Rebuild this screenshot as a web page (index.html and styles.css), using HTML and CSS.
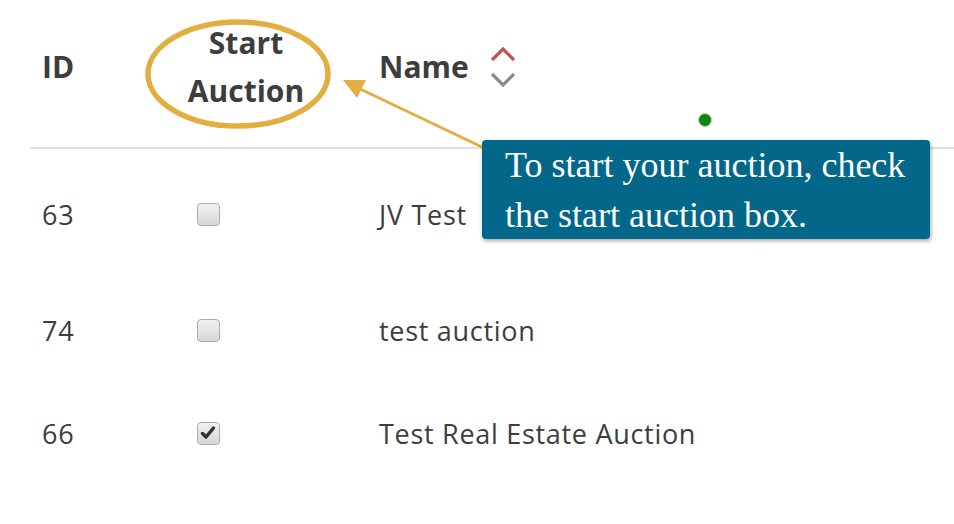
FILE: index.html
```html
<!DOCTYPE html>
<html>
<head>
<meta charset="utf-8">
<link rel="stylesheet" href="styles.css">
</head>
<body>
<div class="page">
  <div class="table">
    <div class="thead">
      <div class="th th-id">ID</div>
      <div class="th th-start"><span class="th-start-text">Start<br>Auction</span></div>
      <div class="th th-name">Name
        <svg class="sort" width="28" height="42" viewBox="0 0 28 42">
          <polyline points="3,13 14,2 25,13" fill="none" stroke="#c9514f" stroke-width="3.2"/>
          <polyline points="3,27 14,38 25,27" fill="none" stroke="#8a8a8a" stroke-width="3.2"/>
        </svg>
      </div>
    </div>
    <div class="row row-first">
      <div class="td">63</div>
      <div class="td"><span class="cb"></span></div>
      <div class="td">JV Test</div>
    </div>
    <div class="row">
      <div class="td">74</div>
      <div class="td"><span class="cb"></span></div>
      <div class="td">test auction</div>
    </div>
    <div class="row">
      <div class="td">66</div>
      <div class="td"><span class="cb cb-checked"><svg width="18" height="18" viewBox="0 0 18 18"><path d="M3.5 9.5 L7 13 L14.5 4" fill="none" stroke="#333" stroke-width="3.5" stroke-linecap="round" stroke-linejoin="round"/></svg></span></div>
      <div class="td">Test Real Estate Auction</div>
    </div>
  </div>

  <svg class="annot" width="954" height="524" viewBox="0 0 954 524">
    <ellipse cx="238" cy="74" rx="90" ry="52" fill="none" stroke="#e1ae3f" stroke-width="5.5"/>
    <line x1="484" y1="148" x2="356" y2="87" stroke="#e1ae3f" stroke-width="3"/>
    <polygon points="343,80 366,80 357,98" fill="#e1ae3f"/>
  </svg>
  <span class="dot"></span>
  <div class="tip">To start your auction, check<br>the start auction box.</div>
</div>
</body>
</html>
```

FILE: styles.css
```css
html, body {
  margin: 0;
  padding: 0;
  background: #fff;
}
.page {
  position: relative;
  width: 954px;
  height: 524px;
  overflow: hidden;
  font-family: "Open Sans", "Liberation Sans", sans-serif;
  color: #3d3d3d;
}
.table {
  margin-left: 30px;
}
.thead, .row {
  display: grid;
  grid-template-columns: 155px 182px 1fr;
}
.thead {
  height: 133px;
  padding-bottom: 14px;
  border-bottom: 2px solid #e2e2e2;
  align-items: center;
}
.th {
  font-weight: 700;
  font-size: 30px;
  padding-left: 12px;
}
.th-start {
  padding-left: 0;
}
.th-start-text {
  display: block;
  width: 122px;
  text-align: center;
  line-height: 48px;
}
.th-name {
  display: flex;
  align-items: center;
  gap: 20px;
}
.sort {
  display: block;
  margin-top: 2px;
}
.row {
  height: 103px;
  align-items: center;
}
.row-first {
  height: 130px;
}
.td {
  font-size: 27px;
  letter-spacing: 0.7px;
  padding-left: 12px;
}
.cb {
  display: block;
  width: 21px;
  height: 21px;
  border: 1px solid #a9a9a9;
  border-radius: 4px;
  background: linear-gradient(#f2f2f2, #d6d6d6);
  box-shadow: inset 0 0 1px #fff;
  position: relative;
}
.cb svg {
  position: absolute;
  left: 1px;
  top: 1px;
}
.annot {
  position: absolute;
  left: 0;
  top: 0;
}
.dot {
  position: absolute;
  left: 698px;
  top: 113px;
  width: 12px;
  height: 12px;
  border-radius: 50%;
  background: #0a8a0a;
  border: 1px solid #cfcfcf;
}
.tip {
  position: absolute;
  left: 482px;
  top: 140px;
  width: 425px;
  height: 99px;
  padding-left: 23px;
  box-sizing: content-box;
  background: #026789;
  border-radius: 4px;
  box-shadow: 1px 2px 4px rgba(0,0,0,0.35);
  color: #fff;
  font-family: "Liberation Serif", "Times New Roman", serif;
  font-size: 36px;
  line-height: 50px;
}
```
